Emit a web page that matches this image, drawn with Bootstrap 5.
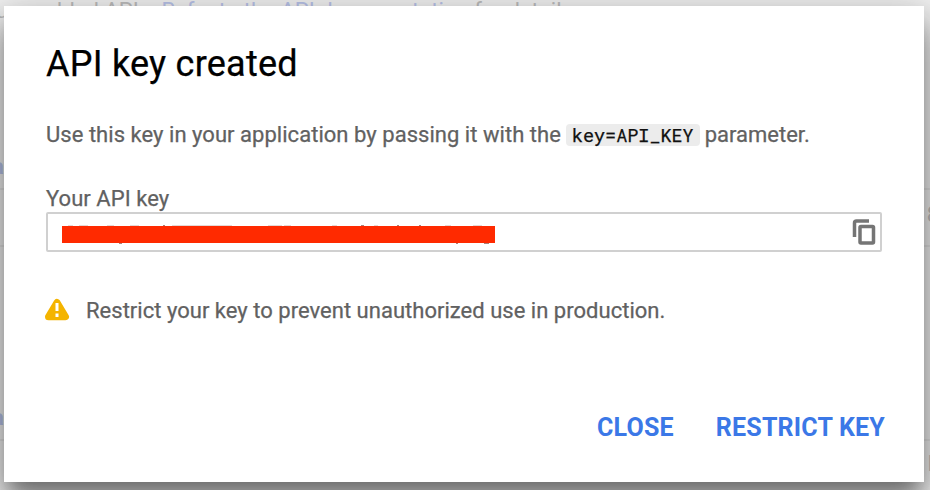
<!DOCTYPE html>
<html lang="en">
<head>
<meta charset="utf-8">
<meta name="viewport" content="width=device-width, initial-scale=1">
<title>API key created</title>
<link href="https://cdn.jsdelivr.net/npm/bootstrap@5.3.0/dist/css/bootstrap.min.css" rel="stylesheet">
<style>
  body { font-family: Roboto, "Liberation Sans", sans-serif; font-size: 22px; line-height: 26px; background: #f2f2f2; color: #616161; height: 490px; }
  .page-behind { height: 490px; color: #bdbdbd; white-space: nowrap; }
  .intro { height: 182px; margin-top: -2px; line-height: 26px; }
  .intro-text { margin-left: -4px; letter-spacing: .03px; }
  .intro a, .cut-link { color: #b9c3ea; text-decoration: none; }
  .rule-row { border-top: 2px solid #e4e4e4; }
  .row-a { height: 57px; margin-top: 8px; padding-top: 12px; }
  .row-b { height: 194px; padding-bottom: 8px; }
  .row-c { height: 52px; padding-top: 10px; }
  .cut-link { font-weight: 700; margin-left: -8px; }
  .cut-end { margin-right: -9px; }
  .dialog { left: 4px; top: 6px; width: 920px; height: 476px; padding: 35px 42px 0; border: 0; border-radius: 0; -webkit-text-stroke: .25px currentColor;
    box-shadow: 0 14px 16px -8px rgba(0,0,0,.22), 0 22px 30px 0 rgba(0,0,0,.32), 0 10px 40px 6px rgba(0,0,0,.22); }
  .dialog h1 { font-size: 36px; line-height: 46px; font-weight: 400; color: #000; height: 46px; letter-spacing: .24px; }
  .lead-in { margin-top: 35px; height: 26px; white-space: nowrap; }
  .lead-text { letter-spacing: .035px; }
  .lead-in code { font-family: "Roboto Mono", "DejaVu Sans Mono", monospace; font-size: 18.5px; line-height: 22px; letter-spacing: -.03px; color: #111; background: #ececec; border-radius: 4px; padding: 0 6px; height: 22px; margin: 2px 5px 0 5px; }
  .key-label { margin-top: 38px; height: 26px; letter-spacing: .05px; }
  .key-box { height: 40px; width: 836px; border: 2px solid #d0d0d0; border-radius: 2px; padding: 0 4px 0 14px; }
  .key-mask { margin-top: 5px; }
  .notice { margin-top: 46px; height: 26px; }
  .notice-text { letter-spacing: .02px; }
  .notice svg { margin: -3px 16px 0 -2px; }
  .actions { margin-top: 86px; gap: 42px; margin-right: -3px; }
  .actions .btn { font-size: 25px; line-height: 36px; font-weight: 700; letter-spacing: .2px; color: #3b78e7; border: 0; border-radius: 0; -webkit-text-stroke: 0; }
</style>
</head>
<body class="overflow-hidden position-relative">
<main class="page-behind overflow-hidden d-flex flex-column" aria-hidden="true">
  <div class="intro d-flex flex-column justify-content-between flex-shrink-0">
    <span class="intro-text">ur enabled APIs. <a href="#">Refer to the API documentation</a> for details.</span>
    <span class="cut-link">a</span>
  </div>
  <div class="rule-row row-a d-flex justify-content-end flex-shrink-0"><span class="cut-end">8</span></div>
  <div class="rule-row row-b d-flex align-items-end flex-shrink-0"><span class="cut-link">a</span></div>
  <div class="rule-row row-c d-flex justify-content-end flex-shrink-0"><span class="cut-end">k</span></div>
</main>

<section class="dialog card position-absolute" role="dialog" aria-labelledby="dialog-title">
  <h1 id="dialog-title" class="m-0">API key created</h1>
  <div class="lead-in d-flex"><span class="lead-text">Use this key in your application by passing it with the</span><code>key=API_KEY</code><span>parameter.</span></div>
  <div class="key-label">Your API key</div>
  <div class="key-box d-flex align-items-center justify-content-between">
    <svg class="key-mask" width="433" height="20" viewBox="0 0 433 20" role="img" aria-label="Hidden key">
      <path d="M6 .7h5M17 .7h9M45 .7h7M68 .7h9M110 .7h60M206 .7h14M222 .7h7M270 .7h5M312 .7h4M383 .7h6M411 .7h9" stroke="#ddd0ce" stroke-width="1"/>
      <path d="M101 1h2M299 1h3M335 1h2M357 1h2M57 18h3M394 18h2M422 18h5" stroke="#8a5a52" stroke-width="1.6"/>
      <path d="M0 1h433v17H0z" fill="#ff2a00"/>
    </svg>
    <svg width="24" height="26" viewBox="0 0 24 26" fill="none" stroke="#757575" stroke-width="3.500" aria-label="Copy" role="img">
      <path d="M2.500 18V4Q2.500 2 4.500 2H17"/>
      <rect x="8" y="7.500" width="13.500" height="16.500" rx="1"/>
    </svg>
  </div>
  <div class="notice d-flex align-items-center">
    <svg width="26" height="24" viewBox="0 0 26 24" aria-hidden="true">
      <path d="M13 4.500L21.500 18.800H4.500Z" fill="#f4b400" stroke="#f4b400" stroke-width="7" stroke-linejoin="round"/>
      <path d="M11.500 5h3v8h-3zM11.500 15.500h3v3.500h-3z" fill="#fff"/>
    </svg>
    <span class="notice-text">Restrict your key to prevent unauthorized use in production.</span>
  </div>
  <div class="actions d-flex justify-content-end">
    <button type="button" class="btn p-0">CLOSE</button>
    <button type="button" class="btn p-0">RESTRICT KEY</button>
  </div>
</section>
<script src="https://cdn.jsdelivr.net/npm/bootstrap@5.3.0/dist/js/bootstrap.bundle.min.js"></script>
</body>
</html>
